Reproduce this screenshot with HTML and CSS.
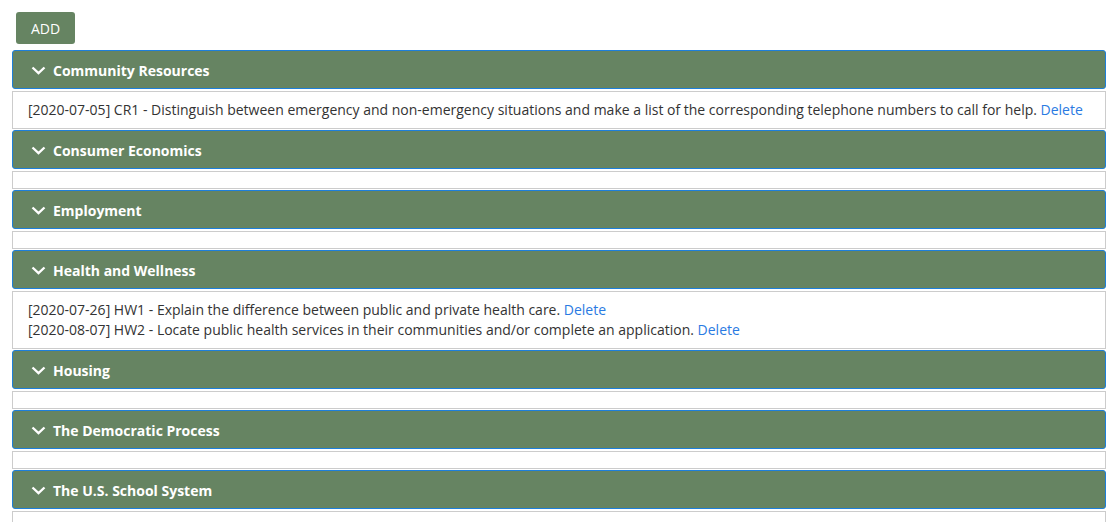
FILE: index.html
```html
<!DOCTYPE html>
<html lang="en">
<head>
  <meta charset="UTF-8">
  <title>Goals</title>
  <link rel="stylesheet" href="styles.css">
</head>
<body>

  <div class="wrap">
    <button class="add-btn">ADD</button>

    <div class="accordion">
      <div class="acc-header">
        <svg class="chev" viewBox="0 0 15 9"><path d="M1.5 1.5 L7.5 7.2 L13.5 1.5"/></svg>
        Community Resources
      </div>
      <div class="acc-panel">
        <div class="item">[2020-07-05] CR1 - Distinguish between emergency and non-emergency situations and make a list of the corresponding telephone numbers to call for help. <a href="#">Delete</a></div>
      </div>

      <div class="acc-header">
        <svg class="chev" viewBox="0 0 15 9"><path d="M1.5 1.5 L7.5 7.2 L13.5 1.5"/></svg>
        Consumer Economics
      </div>
      <div class="acc-panel"></div>

      <div class="acc-header">
        <svg class="chev" viewBox="0 0 15 9"><path d="M1.5 1.5 L7.5 7.2 L13.5 1.5"/></svg>
        Employment
      </div>
      <div class="acc-panel"></div>

      <div class="acc-header">
        <svg class="chev" viewBox="0 0 15 9"><path d="M1.5 1.5 L7.5 7.2 L13.5 1.5"/></svg>
        Health and Wellness
      </div>
      <div class="acc-panel">
        <div class="item">[2020-07-26] HW1 - Explain the difference between public and private health care. <a href="#">Delete</a></div>
        <div class="item">[2020-08-07] HW2 - Locate public health services in their communities and/or complete an application. <a href="#">Delete</a></div>
      </div>

      <div class="acc-header">
        <svg class="chev" viewBox="0 0 15 9"><path d="M1.5 1.5 L7.5 7.2 L13.5 1.5"/></svg>
        Housing
      </div>
      <div class="acc-panel"></div>

      <div class="acc-header">
        <svg class="chev" viewBox="0 0 15 9"><path d="M1.5 1.5 L7.5 7.2 L13.5 1.5"/></svg>
        The Democratic Process
      </div>
      <div class="acc-panel"></div>

      <div class="acc-header">
        <svg class="chev" viewBox="0 0 15 9"><path d="M1.5 1.5 L7.5 7.2 L13.5 1.5"/></svg>
        The U.S. School System
      </div>
      <div class="acc-panel"></div>
    </div>
  </div>

</body>
</html>
```

FILE: styles.css
```css
body {
  font-family: "Open Sans", Arial, sans-serif;
  font-size: 14px;
  color: #333;
  background: #fff;
  margin: 0;
}

.wrap {
  padding: 12px 10px 0 12px;
}

.add-btn {
  display: block;
  margin: 0 0 6px 4px;
  height: 32px;
  padding: 0 15px;
  background: #668462;
  color: #fff;
  border: none;
  border-radius: 3px;
  font-family: inherit;
  font-size: 14px;
  cursor: pointer;
}

.acc-header {
  display: flex;
  align-items: center;
  gap: 7px;
  height: 39px;
  box-sizing: border-box;
  padding: 1px 0 0 18px;
  background: #668462;
  border: 1px solid #1e7fd9;
  border-radius: 3px;
  color: #fff;
  font-weight: bold;
  margin-bottom: 2px;
}

.chev {
  width: 15px;
  height: 9px;
  fill: none;
  stroke: #fff;
  stroke-width: 2.3;
}

.acc-panel {
  border: 1px solid #ccc;
  padding: 8px 15px;
  line-height: 20px;
  margin-bottom: 1px;
}

.acc-panel a {
  color: #2a7ae2;
  text-decoration: none;
}
```
